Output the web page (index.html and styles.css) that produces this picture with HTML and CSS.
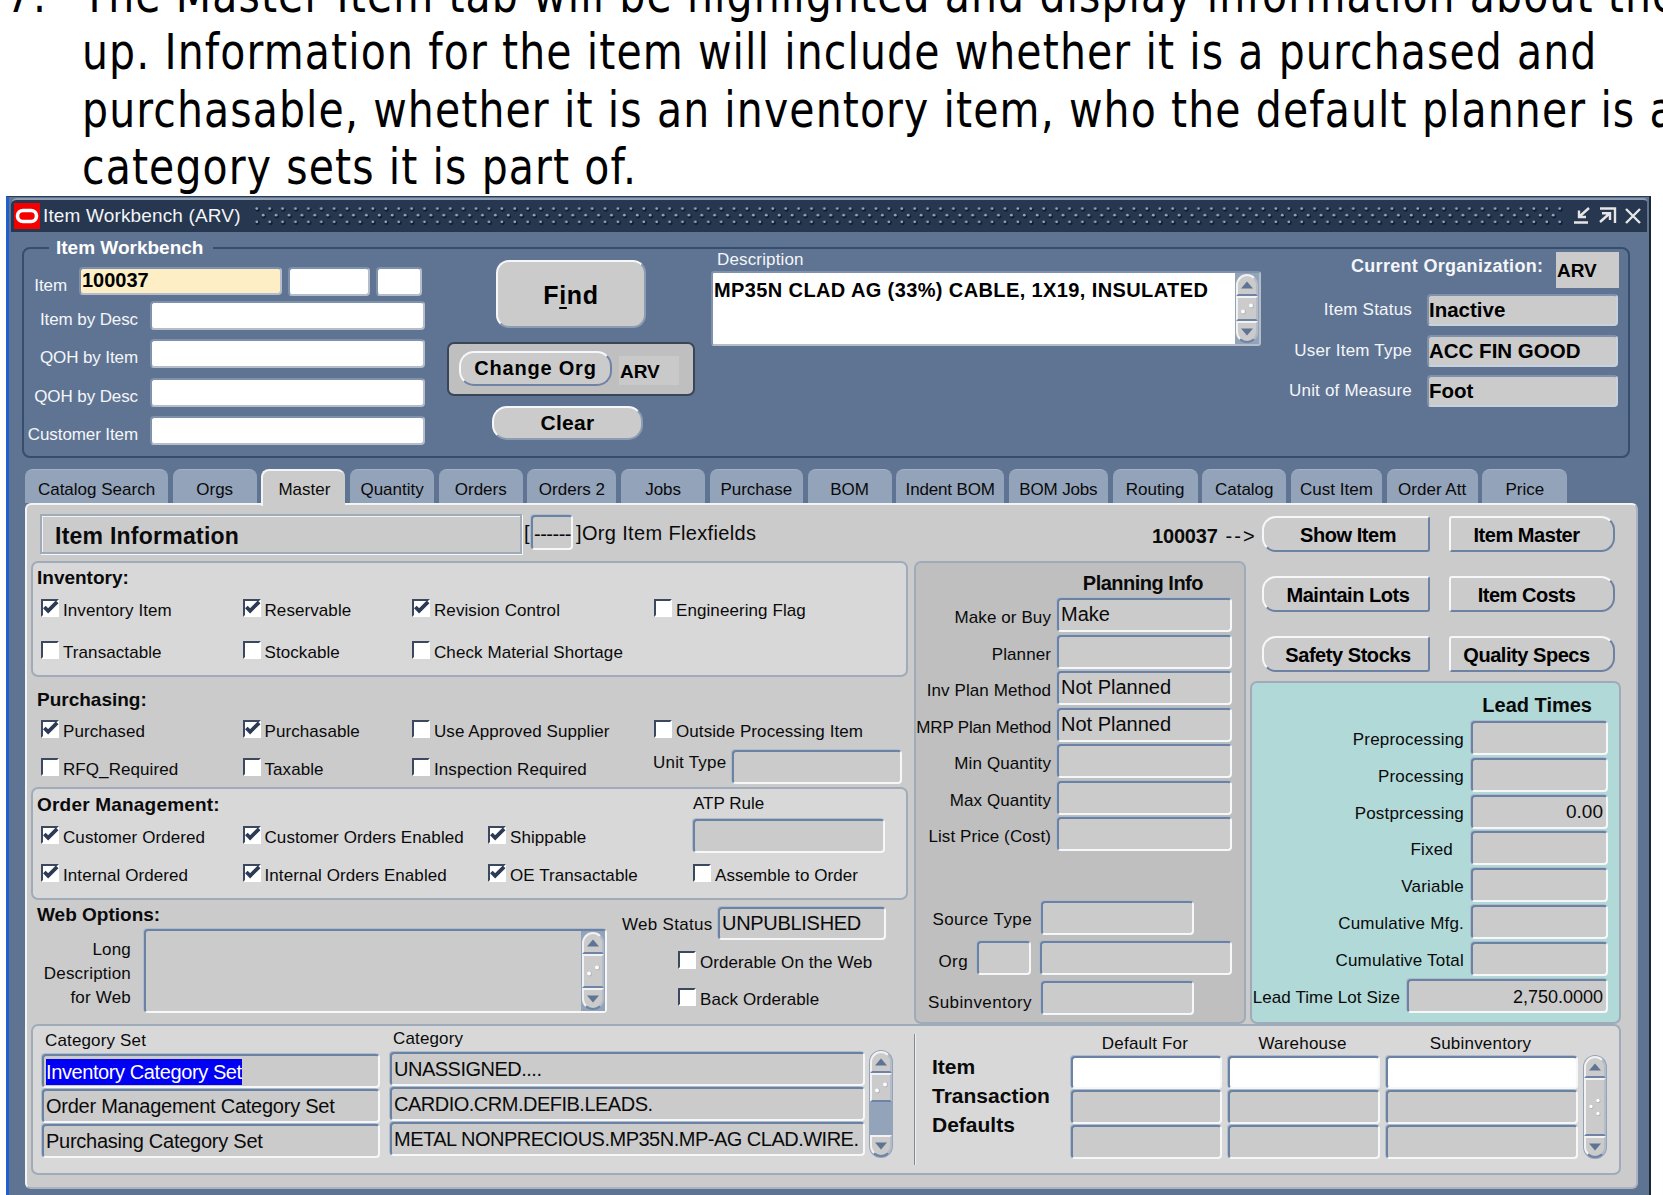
FILE: index.html
```html
<!DOCTYPE html>
<html lang="en">
<head>
    <meta charset="UTF-8">
    <title>Item Workbench (ARV)</title>
    <link rel="stylesheet" href="styles.css">
</head>
<body>
    <!-- Shared icons -->
    <svg class="defs" width="0" height="0">
        <symbol id="tick" viewBox="0 0 18 18"><path d="M2.5 8.5 L6.5 12.5 L16 3" fill="none" stroke="#2c3a55" stroke-width="4"/></symbol>
        <symbol id="up" viewBox="0 0 12 8"><path d="M0 7.5 L6 0.5 L12 7.5 Z" fill="#5f7493"/></symbol>
        <symbol id="down" viewBox="0 0 12 8"><path d="M0 0.5 L6 7.5 L12 0.5 Z" fill="#5f7493"/></symbol>
        <symbol id="grip" viewBox="0 0 14 12"><circle cx="3.5" cy="9" r="2.4" fill="#aab1ba"/><circle cx="11.5" cy="3" r="2.4" fill="#aab1ba"/><circle cx="3" cy="8.5" r="2" fill="#fff"/><circle cx="11" cy="2.5" r="2" fill="#fff"/></symbol>
        <symbol id="grip3" viewBox="0 0 14 20"><circle cx="3.5" cy="10" r="2" fill="#aab1ba"/><circle cx="10.5" cy="4" r="2" fill="#aab1ba"/><circle cx="10.5" cy="17" r="2" fill="#aab1ba"/><circle cx="3" cy="9.5" r="1.7" fill="#fff"/><circle cx="10" cy="3.5" r="1.7" fill="#fff"/><circle cx="10" cy="16.5" r="1.7" fill="#fff"/></symbol>
    </svg>

    <div class="intro">
        <div class="num">7.</div>
        <div class="lines">
            <div class="line">The Master Item tab will be highlighted and display information about the</div>
            <div class="line">up. Information for the item will include whether it is a purchased and</div>
            <div class="line">purchasable, whether it is an inventory item, who the default planner is a</div>
            <div class="line">category sets it is part of.</div>
        </div>
    </div>

    <div class="window">
        <div class="titlebar">
            <svg class="logo" viewBox="0 0 26 26"><rect width="26" height="26" fill="#f50000"/><rect x="3.5" y="7.5" width="19" height="11" rx="5.5" fill="none" stroke="#fff" stroke-width="3.6"/></svg>
            <span class="title">Item Workbench (ARV)</span>
            <svg class="dots" width="1309" height="22">
                <pattern id="studs" width="12.9" height="22" patternUnits="userSpaceOnUse">
                    <g fill="#0f1d33"><circle cx="3.6" cy="4.6" r="2.2"/><circle cx="10" cy="11.2" r="2.2"/><circle cx="3.6" cy="17.8" r="2.2"/></g>
                    <g fill="#94a4b8"><circle cx="2.8" cy="3.6" r="1.4"/><circle cx="9.2" cy="10.2" r="1.4"/><circle cx="2.8" cy="16.8" r="1.4"/></g>
                </pattern>
                <rect width="1309" height="22" fill="url(#studs)"/>
            </svg>
            <svg class="winicons" width="68" height="18" fill="none" stroke="#e6e6e6" stroke-width="2.4">
                <path d="M15 1 L6 9 M5 3.5 V10 H12 M0 15.5 H14"/>
                <path d="M26 1.5 H41 V16 M26 15 L35 7 M28 6.2 H36 V13"/>
                <path d="M52 2 L66 16 M66 2 L52 16"/>
            </svg>
        </div>

        <fieldset class="workbench">
            <legend>Item Workbench</legend>
            <div class="top">
                <div class="search">
                    <div class="srow first">
                        <label>Item</label>
                        <div class="input item">100037</div>
                        <div class="input seg2"></div>
                        <div class="input seg3"></div>
                    </div>
                    <div class="srow"><label>Item by Desc</label><div class="input"></div></div>
                    <div class="srow"><label>QOH by Item</label><div class="input"></div></div>
                    <div class="srow"><label>QOH by Desc</label><div class="input"></div></div>
                    <div class="srow"><label>Customer Item</label><div class="input"></div></div>
                </div>

                <div class="actions">
                    <button class="btn find"><span>F<u>i</u>nd</span></button>
                    <div class="change">
                        <button class="btn org">Change Org</button>
                        <span class="arv">ARV</span>
                    </div>
                    <button class="btn clear">Clear</button>
                </div>

                <div class="desc">
                    <label>Description</label>
                    <div class="descbox">
                        <div class="desctext">MP35N CLAD AG (33%) CABLE, 1X19, INSULATED</div>
                        <div class="scroll">
                            <div class="arrow top-end"><svg><use href="#up"/></svg></div>
                            <div class="thumb"><svg><use href="#grip"/></svg></div>
                            <div class="arrow bottom-end"><svg><use href="#down"/></svg></div>
                        </div>
                    </div>
                </div>

                <div class="status">
                    <div class="orgrow"><b>Current Organization:</b><span class="orgbox">ARV</span></div>
                    <div class="strow"><label>Item Status</label><div class="input">Inactive</div></div>
                    <div class="strow"><label>User Item Type</label><div class="input">ACC FIN GOOD</div></div>
                    <div class="strow"><label>Unit of Measure</label><div class="input">Foot</div></div>
                </div>
            </div>
        </fieldset>

        <div class="tabs">
            <div class="tab t143">Catalog Search</div>
            <div class="tab">Orgs</div>
            <div class="tab active">Master</div>
            <div class="tab">Quantity</div>
            <div class="tab">Orders</div>
            <div class="tab t89">Orders 2</div>
            <div class="tab">Jobs</div>
            <div class="tab t93">Purchase</div>
            <div class="tab">BOM</div>
            <div class="tab t108">Indent BOM</div>
            <div class="tab t99">BOM Jobs</div>
            <div class="tab t85">Routing</div>
            <div class="tab">Catalog</div>
            <div class="tab t91">Cust Item</div>
            <div class="tab t91">Order Att</div>
            <div class="tab t85">Price</div>
        </div>

        <div class="panel">
            <div class="upper">
                <div class="main">
                    <div class="infohead">
                        <div class="infobox">Item Information</div>
                        <span class="br">[</span><div class="field flex">------</div><span class="flexlabel">]Org Item Flexfields</span>
                        <span class="pointer"><b>100037</b> --&gt;</span>
                    </div>

                    <div class="cols">
                        <div class="left">
                            <div class="box inventory">
                                <h3>Inventory:</h3>
                                <div class="checks">
                                    <div class="check"><i><svg><use href="#tick"/></svg></i>Inventory Item</div>
                                    <div class="check"><i><svg><use href="#tick"/></svg></i>Reservable</div>
                                    <div class="check"><i><svg><use href="#tick"/></svg></i>Revision Control</div>
                                    <div class="check"><i></i>Engineering Flag</div>
                                    <div class="check"><i></i>Transactable</div>
                                    <div class="check"><i></i>Stockable</div>
                                    <div class="check"><i></i>Check Material Shortage</div>
                                </div>
                            </div>

                            <div class="purchasing">
                                <h3>Purchasing:</h3>
                                <div class="checks">
                                    <div class="check"><i><svg><use href="#tick"/></svg></i>Purchased</div>
                                    <div class="check"><i><svg><use href="#tick"/></svg></i>Purchasable</div>
                                    <div class="check"><i></i>Use Approved Supplier</div>
                                    <div class="check"><i></i>Outside Processing Item</div>
                                    <div class="check"><i></i>RFQ_Required</div>
                                    <div class="check"><i></i>Taxable</div>
                                    <div class="check"><i></i>Inspection Required</div>
                                    <div class="unit"><label>Unit Type</label><div class="field"></div></div>
                                </div>
                            </div>

                            <div class="box ordermgmt">
                                <div class="omleft">
                                    <h3>Order Management:</h3>
                                    <div class="checks">
                                        <div class="check"><i><svg><use href="#tick"/></svg></i>Customer Ordered</div>
                                        <div class="check"><i><svg><use href="#tick"/></svg></i>Customer Orders Enabled</div>
                                        <div class="check"><i><svg><use href="#tick"/></svg></i>Shippable</div>
                                        <div class="check"><i><svg><use href="#tick"/></svg></i>Internal Ordered</div>
                                        <div class="check"><i><svg><use href="#tick"/></svg></i>Internal Orders Enabled</div>
                                        <div class="check"><i><svg><use href="#tick"/></svg></i>OE Transactable</div>
                                    </div>
                                </div>
                                <div class="atp">
                                    <label>ATP Rule</label>
                                    <div class="field"></div>
                                    <div class="check"><i></i>Assemble to Order</div>
                                </div>
                            </div>

                            <div class="web">
                                <div class="webleft">
                                    <h3>Web Options:</h3>
                                    <div class="longdesc">
                                        <label>Long<br>Description<br>for Web</label>
                                        <div class="field area">
                                            <div class="scroll">
                                                <div class="arrow top-end"><svg><use href="#up"/></svg></div>
                                                <div class="thumb"><svg><use href="#grip"/></svg></div>
                                                <div class="arrow bottom-end"><svg><use href="#down"/></svg></div>
                                            </div>
                                        </div>
                                    </div>
                                </div>
                                <div class="webright">
                                    <div class="webstatus"><label>Web Status</label><div class="field">UNPUBLISHED</div></div>
                                    <div class="check"><i></i>Orderable On the Web</div>
                                    <div class="check"><i></i>Back Orderable</div>
                                </div>
                            </div>
                        </div>

                        <div class="box planning">
                            <h3>Planning Info</h3>
                            <div class="prow"><label>Make or Buy</label><div class="field">Make</div></div>
                            <div class="prow"><label>Planner</label><div class="field"></div></div>
                            <div class="prow"><label>Inv Plan Method</label><div class="field">Not Planned</div></div>
                            <div class="prow"><label>MRP Plan Method</label><div class="field">Not Planned</div></div>
                            <div class="prow"><label>Min Quantity</label><div class="field"></div></div>
                            <div class="prow"><label>Max Quantity</label><div class="field"></div></div>
                            <div class="prow"><label>List Price (Cost)</label><div class="field"></div></div>
                            <div class="source">
                                <div class="sourcerow"><label>Source Type</label><div class="field"></div></div>
                                <div class="sourcerow orgline"><label>Org</label><div class="field small"></div><div class="field wide"></div></div>
                                <div class="sourcerow subinv"><label>Subinventory</label><div class="field"></div></div>
                            </div>
                        </div>
                    </div>
                </div>

                <div class="side">
                    <div class="buttons">
                        <button class="btn lround">Show Item</button>
                        <button class="btn rround">Item Master</button>
                        <button class="btn lround">Maintain Lots</button>
                        <button class="btn rround">Item Costs</button>
                        <button class="btn lround">Safety Stocks</button>
                        <button class="btn rround">Quality Specs</button>
                    </div>
                    <div class="box lead">
                        <h3>Lead Times</h3>
                        <div class="lrow"><label>Preprocessing</label><div class="field"></div></div>
                        <div class="lrow"><label>Processing</label><div class="field"></div></div>
                        <div class="lrow"><label>Postprcessing</label><div class="field">0.00</div></div>
                        <div class="lrow fixed"><label>Fixed</label><div class="field"></div></div>
                        <div class="lrow"><label>Variable</label><div class="field"></div></div>
                        <div class="lrow"><label>Cumulative Mfg.</label><div class="field"></div></div>
                        <div class="lrow"><label>Cumulative Total</label><div class="field"></div></div>
                        <div class="lrow lot"><label>Lead Time Lot Size</label><div class="field">2,750.0000</div></div>
                    </div>
                </div>
            </div>

            <div class="box bottom">
                <div class="catset">
                    <label>Category Set</label>
                    <div class="field"><mark>Inventory Category Set</mark></div>
                    <div class="field">Order Management Category Set</div>
                    <div class="field">Purchasing Category Set</div>
                </div>
                <div class="category">
                    <label>Category</label>
                    <div class="field">UNASSIGNED....</div>
                    <div class="field">CARDIO.CRM.DEFIB.LEADS.</div>
                    <div class="field">METAL NONPRECIOUS.MP35N.MP-AG CLAD.WIRE.</div>
                </div>
                <div class="scroll catscroll">
                    <div class="arrow top-end"><svg><use href="#up"/></svg></div>
                    <div class="thumb"><svg><use href="#grip"/></svg></div>
                    <div class="track"></div>
                    <div class="arrow bottom-end"><svg><use href="#down"/></svg></div>
                </div>
                <div class="rule"></div>
                <div class="itd">Item<br>Transaction<br>Defaults</div>
                <div class="defaults">
                    <label>Default For</label><label>Warehouse</label><label>Subinventory</label>
                    <div class="field white"></div><div class="field white"></div><div class="field white"></div>
                    <div class="field"></div><div class="field"></div><div class="field"></div>
                    <div class="field"></div><div class="field"></div><div class="field"></div>
                </div>
                <div class="scroll defscroll">
                    <div class="arrow top-end"><svg><use href="#up"/></svg></div>
                    <div class="thumb"><svg class="tall"><use href="#grip3"/></svg></div>
                    <div class="arrow bottom-end"><svg><use href="#down"/></svg></div>
                </div>
            </div>
        </div>
    </div>
</body>
</html>
```

FILE: styles.css
```css
* {
    box-sizing: border-box;
}

body {
    margin: 0;
    width: 1663px;
    height: 1195px;
    overflow: hidden;
    background: #fff;
    color: #0a0a0a;
    font-family: "Liberation Sans", Arial, sans-serif;
    font-size: 17px;
    line-height: 20px;
    white-space: nowrap;
}

.defs {
    display: block;
}

h3 {
    margin: 0;
    font-size: 19px;
    line-height: 22px;
    height: 20px;
}

label {
    display: block;
}

/* Instruction text above the window */
.intro {
    display: flex;
    height: 196px;
    overflow: hidden;
    font-family: "DejaVu Sans", sans-serif;
    font-size: 50px;
    line-height: 57.4px;
    color: #000;
}

.num {
    width: 82px;
    margin-top: -33px;
    padding-left: 7px;
}

.num,
.line {
    transform: scaleX(0.82);
    transform-origin: 0 0;
    letter-spacing: 1.35px;
}

.lines {
    width: 1581px;
    margin-top: -33px;
}

/* Window frame */
.window {
    width: 1645px;
    height: 1010px;
    margin-left: 6px;
    padding: 1px 3px 0 2px;
    background: #5f7493;
    border-left: 3px solid #1f5fd0;
    border-top: 1px solid #2c3b52;
    border-right: 2px solid #1c2738;
}

.titlebar {
    display: flex;
    align-items: center;
    height: 34px;
    margin-right: -1px;
    padding-left: 3px;
    background: #26374f;
    border-top: 2px solid #8f9db1;
    border-radius: 6px 4px 0 0;
}

.logo {
    width: 26px;
    height: 26px;
}

.title {
    width: 214px;
    padding-left: 3px;
    color: #f2f4f7;
    font-size: 19px;
    letter-spacing: 0.15px;
}

.winicons {
    margin-left: 11px;
}

/* Search area */
.workbench {
    width: 1608px;
    height: 220px;
    margin: 6px 0 0 11px;
    padding: 0;
    border: 2px solid #364d6e;
    border-radius: 8px;
}

legend {
    height: 20px;
    margin-left: 25px;
    padding: 0 10px 0 7px;
    color: #fff;
    font-size: 19px;
    font-weight: bold;
}

.top {
    display: flex;
    color: #f4f6f9;
}

.input {
    height: 29px;
    background: #fff;
    border: 2px solid;
    border-color: #7f91ab #b4bdc9 #b4bdc9 #7f91ab;
    border-radius: 4px;
    color: #000;
    font-size: 20px;
    font-weight: bold;
}

.search {
    width: 423px;
    padding-top: 9px;
}

.srow {
    display: flex;
    height: 29px;
    margin-top: 9.3px;
}

.srow:nth-child(2) {
    margin-top: 5px;
}

.srow.first {
    margin-top: 0;
}

.srow label {
    width: 114px;
    margin-right: 12px;
    padding-top: 9px;
    text-align: right;
    letter-spacing: -0.1px;
}

.srow .input {
    width: 275px;
}

.srow.first label {
    width: 43px;
}

.srow .item {
    width: 203px;
    height: 28px;
    padding-left: 1px;
    line-height: 23px;
    background: #fdeec6;
}

.srow .seg2 {
    width: 82px;
    margin: 0 6px 0 6px;
}

.srow .seg3 {
    width: 46px;
}

/* Buttons */
.btn {
    padding: 0;
    background: #cbcbcb;
    border: 2px solid;
    border-color: #f5f7f9 #8c9cb3 #8c9cb3 #f5f7f9;
    color: #000;
    font-family: inherit;
    font-size: 20px;
    font-weight: bold;
}

.actions {
    display: flex;
    flex-direction: column;
    width: 264px;
}

.find {
    width: 150px;
    height: 68px;
    margin: 2px 0 0 49px;
    padding-top: 2px;
    border-radius: 13px;
    font-size: 25px;
    letter-spacing: 0.7px;
}

.find u {
    text-underline-offset: 3px;
}

.change {
    display: flex;
    width: 248px;
    height: 54px;
    margin-top: 14px;
    padding: 7px 10px;
    background: #bfbfbf;
    border: 2px solid #3a4658;
    border-radius: 7px;
}

.org {
    width: 153px;
    height: 35px;
    border-color: #f5f7f9 #6f84a4 #6f84a4 #f5f7f9;
    border-radius: 15px;
    letter-spacing: 0.8px;
}

.arv {
    width: 60px;
    height: 29px;
    margin: 5px 0 0 7px;
    padding-left: 1px;
    background: #c9c9c9;
    color: #000;
    font-size: 19px;
    font-weight: bold;
    line-height: 31px;
}

.clear {
    width: 151px;
    height: 34px;
    margin: 10px 0 0 45px;
    border-radius: 15px;
    font-size: 21px;
    letter-spacing: 0.3px;
}

.desc {
    width: 550px;
}

.desc label {
    height: 13px;
    padding-left: 6px;
    line-height: 4px;
    letter-spacing: 0.15px;
}

.descbox {
    display: flex;
    justify-content: space-between;
    height: 75px;
    background: #fff;
    border: 2px solid;
    border-color: #7f91ab #b4bdc9 #b4bdc9 #7f91ab;
    border-radius: 3px;
    color: #000;
}

.desctext {
    padding: 7px 0 0 1px;
    font-size: 20px;
    font-weight: bold;
    letter-spacing: 0.39px;
}

/* Scroll bars */
.scroll {
    display: flex;
    flex-direction: column;
    width: 24px;
    background: #93a3b9;
    padding: 1px;
}

.scroll svg {
    display: block;
    width: 12px;
    height: 8px;
}

.arrow,
.thumb {
    display: flex;
    align-items: center;
    justify-content: center;
    flex: 0 0 22px;
    background: #cbcbcb;
    border: 2px solid;
    border-color: #f2f2f2 #b3bcc8 #6f84a4 #f2f2f2;
}

.scroll .thumb {
    flex: 1;
}

.thumb svg {
    width: 14px;
    height: 12px;
}

.scroll .tall {
    width: 14px;
    height: 20px;
}

.top-end {
    border-radius: 11px 11px 0 0;
}

.bottom-end {
    border-radius: 0 0 11px 11px;
}

.status {
    width: 357px;
    margin-top: -6px;
}

.orgrow {
    display: flex;
    justify-content: space-between;
    width: 268px;
    height: 36px;
    margin-left: 90px;
    font-size: 18px;
}

.orgrow b {
    padding-top: 4px;
    letter-spacing: 0.3px;
}

.orgbox {
    width: 63px;
    padding-left: 1px;
    background: #cbcbcb;
    color: #000;
    font-size: 19px;
    font-weight: bold;
    line-height: 38px;
}

.strow {
    display: flex;
    justify-content: flex-end;
    margin-top: 8.6px;
}

.orgrow + .strow {
    margin-top: 6px;
}

.strow label {
    margin-right: 15px;
    padding-top: 6px;
    letter-spacing: 0.2px;
}

.strow .input {
    width: 191px;
    height: 32px;
    background: #cbcbcb;
    border-color: #8091ab #c8d2df #c8d2df #8091ab;
    font-size: 20.5px;
    line-height: 28px;
}

/* Tabs */
.tabs {
    position: relative;
    display: flex;
    gap: 4.7px;
    height: 34px;
    margin: 11px 0 0 14px;
}

.tab {
    width: 84px;
    background: #93a3b9;
    border-top: 1px solid #a3b1c4;
    border-radius: 8px 8px 0 0;
    line-height: 40px;
    text-align: center;
}

.t143 { width: 143px; }
.t89 { width: 89px; }
.t93 { width: 93px; }
.t108 { width: 108px; }
.t99 { width: 99px; }
.t85 { width: 85px; }
.t91 { width: 91px; }

.t108,
.t99 {
    letter-spacing: -0.15px;
}

.tab.active {
    height: 37px;
    background: #cbcbcb;
    border-top: 2px solid #f4f4f4;
    border-left: 2px solid #f4f4f4;
    line-height: 38px;
}

/* Main panel */
.panel {
    width: 1613px;
    height: 686px;
    margin-left: 14px;
    padding: 9px 0 0 4px;
    background: #cbcbcb;
    border: 2px solid;
    border-color: #f4f4f4 #aab4c1 #aab4c1 #f4f4f4;
    border-radius: 6px;
}

.upper {
    display: flex;
    height: 510px;
}

.main {
    width: 1215px;
    margin-right: 4px;
}

.box {
    background: #d8d8d8;
    border: 2px solid #a0abb9;
    border-radius: 7px;
}

.field {
    flex: none;
    background: #cbcbcb;
    border: 2px solid;
    border-color: #6c82a2 #f6f7f8 #f6f7f8 #6c82a2;
    border-radius: 4px;
    box-shadow: -1px -1px 0 #aebccd;
    font-size: 20px;
}

.infohead {
    display: flex;
    height: 47px;
}

.infobox {
    width: 482px;
    height: 40px;
    margin-left: 9px;
    padding-left: 13px;
    border: 2px solid #a0abb9;
    box-shadow: inset 1px 1px 0 #f0f2f4, 1px 1px 0 #f6f7f8;
    font-size: 23px;
    font-weight: bold;
    line-height: 40px;
    letter-spacing: 0.25px;
}

.br {
    width: 9px;
    padding-left: 2px;
    font-size: 20px;
    line-height: 38px;
}

.flex {
    width: 42px;
    height: 35px;
    margin-top: 1px;
    padding-left: 1px;
    line-height: 34px;
    letter-spacing: -0.5px;
}

.flexlabel {
    padding-left: 3px;
    font-size: 20px;
    line-height: 39px;
    letter-spacing: 0.35px;
}

.pointer {
    margin-left: auto;
    margin-right: -11px;
    font-size: 20px;
    line-height: 45px;
    letter-spacing: 2.2px;
}

.pointer b {
    letter-spacing: -0.2px;
}

.cols {
    display: flex;
    justify-content: space-between;
    height: 463px;
}

.left {
    width: 877px;
}

/* Check boxes */
.checks {
    display: grid;
    grid-template-columns: 201.5px 169.5px 242px auto;
    margin-left: 4px;
}

.check {
    display: flex;
    gap: 4px;
    height: 18px;
    line-height: 23px;
    letter-spacing: 0.08px;
}

.check i {
    width: 18px;
    height: 18px;
    flex: none;
    background: #fff;
    border: 2px solid;
    border-color: #3c4860 #fff #fff #3c4860;
}

.check svg {
    display: block;
    width: 17px;
    height: 17px;
    margin: -2px 0 0 -1px;
}

.inventory {
    height: 116px;
    padding: 4px 0 0 4px;
}

.inventory .checks {
    margin-top: 12px;
    row-gap: 24px;
}

.purchasing {
    height: 110px;
    padding: 12px 0 0 6px;
}

.purchasing .checks {
    grid-template-rows: 18px 34px;
    align-items: center;
    row-gap: 12px;
    margin-top: 11px;
}

.unit {
    display: flex;
    margin-left: -1px;
}

.unit label {
    width: 79px;
    padding-top: 3px;
    letter-spacing: 0.2px;
}

.unit .field {
    width: 170px;
    height: 34px;
}

.ordermgmt {
    display: flex;
    height: 113px;
    padding: 5px 0 0 4px;
}

.ordermgmt h3 {
    letter-spacing: 0.2px;
}

.omleft {
    width: 656px;
}

.ordermgmt .checks {
    grid-template-columns: 201.5px 245.5px auto;
    margin-top: 12px;
    row-gap: 20px;
}

.atp .field {
    width: 192px;
    height: 34px;
    margin: 5px 0 11px;
}

.web {
    display: flex;
    height: 124px;
}

.webleft {
    width: 590px;
    padding: 4px 0 0 6px;
}

.longdesc {
    display: flex;
    margin-top: 5px;
}

.longdesc label {
    width: 94px;
    margin-right: 13px;
    padding-top: 9px;
    line-height: 24px;
    text-align: right;
    letter-spacing: 0.2px;
}

.area {
    display: flex;
    justify-content: flex-end;
    width: 463px;
    height: 84px;
}

.webstatus {
    display: flex;
    margin: 7px 0 11px;
}

.webstatus label {
    width: 97px;
    padding: 8px 0 0 1px;
    letter-spacing: 0.3px;
}

.webstatus .field {
    width: 168px;
    height: 33px;
    padding-left: 2px;
    line-height: 29px;
    letter-spacing: -0.3px;
}

.webright .check {
    margin: 0 0 19px 57px;
}

/* Planning info */
.planning {
    width: 332px;
    padding: 9px 12px 0 0;
    background: #bfbfbf;
}

.planning h3 {
    margin: 0 29px 6px 0;
    text-align: right;
    font-size: 20px;
    letter-spacing: -0.5px;
}

.prow {
    display: flex;
    justify-content: flex-end;
    height: 34px;
    margin-bottom: 2.5px;
}

.prow label {
    margin-right: 6px;
    padding-top: 10px;
    letter-spacing: 0.1px;
}

.prow:nth-child(5) label {
    letter-spacing: -0.2px;
}

.prow .field {
    width: 175px;
    padding-left: 2px;
    line-height: 29px;
}

.source {
    margin-top: 50px;
}

.sourcerow {
    display: flex;
    height: 34px;
    margin-bottom: 6px;
}

.sourcerow label {
    width: 116px;
    margin-right: 9px;
    padding-top: 9px;
    text-align: right;
    letter-spacing: 0.4px;
}

.sourcerow .field {
    width: 153px;
}

.orgline label {
    width: 53px;
    padding-top: 11px;
}

.subinv label {
    padding-top: 12px;
}

.sourcerow .small {
    width: 54px;
    margin-right: 9px;
}

.sourcerow .wide {
    width: 192px;
}

/* Right side buttons and lead times */
.buttons {
    display: grid;
    grid-template-columns: 168px 166px;
    grid-auto-rows: 36px;
    gap: 24px 19px;
    height: 167px;
    padding: 2px 0 0 12px;
}

.buttons .btn {
    border-color: #f6f7f8 #6c82a2 #6c82a2 #f6f7f8;
    letter-spacing: -0.45px;
    padding-top: 2px;
}

.buttons .lround {
    padding-left: 4px;
    border-radius: 14px 3px 3px 14px;
}

.buttons .rround {
    padding-right: 11px;
    border-radius: 3px 14px 14px 3px;
}

.lead {
    width: 371px;
    height: 343px;
    padding: 11px 11px 0 0;
    background: #b1d9d8;
}

.lead h3 {
    margin: 0 16px 7px 0;
    text-align: right;
    font-size: 20px;
}

.lrow {
    display: flex;
    justify-content: flex-end;
    height: 34px;
    margin-bottom: 2.8px;
}

.lrow label {
    margin-right: 7px;
    padding-top: 9px;
    letter-spacing: 0.2px;
}

.lrow.fixed label {
    margin-right: 18px;
}

.lrow .field {
    width: 137px;
    padding-right: 3px;
    font-size: 19px;
    line-height: 29px;
    text-align: right;
}

.lrow.lot label {
    letter-spacing: 0.1px;
}

.lrow.lot .field {
    width: 201px;
    font-size: 18px;
    line-height: 32px;
}

/* Category sets and transaction defaults */
.bottom {
    display: flex;
    width: 1590px;
    height: 151px;
    padding-left: 9px;
}

.catset {
    width: 348px;
    padding-top: 5px;
}

.category {
    width: 479px;
    padding-top: 3px;
}

.catset label,
.category label {
    height: 23px;
    padding-left: 3px;
    letter-spacing: 0.15px;
}

.catset .field,
.category .field {
    width: 338px;
    height: 34px;
    margin-bottom: 1px;
    padding-left: 2px;
    line-height: 31px;
    letter-spacing: -0.25px;
}

.category .field {
    width: 475px;
    letter-spacing: -0.5px;
}

mark {
    display: inline-block;
    height: 26px;
    margin-top: 3px;
    background: #0000f5;
    color: #fff;
    line-height: 26px;
    letter-spacing: -0.4px;
}

.catscroll,
.defscroll {
    height: 108px;
    margin-top: 24px;
    border-radius: 12px;
}

.catscroll .thumb {
    flex: 0 0 29px;
}

.track {
    flex: 1;
}

.rule {
    width: 2px;
    height: 131px;
    margin: 8px 16px 0 21px;
    background: #7c8797;
    border-right: 1px solid #f0f0f0;
}

.itd {
    width: 139px;
    padding-top: 26px;
    font-size: 21px;
    font-weight: bold;
    line-height: 29px;
}

.defaults {
    display: grid;
    grid-template-columns: 151px 152px 192px;
    grid-template-rows: 21px 33px 34px 34px;
    column-gap: 6px;
    row-gap: 1px;
    padding-top: 8px;
    text-align: center;
}

.defaults label {
    padding-right: 3px;
    letter-spacing: 0.2px;
}

.white {
    background: #fff;
}

.defscroll {
    height: 104px;
    margin: 29px 0 0 5px;
}
```
